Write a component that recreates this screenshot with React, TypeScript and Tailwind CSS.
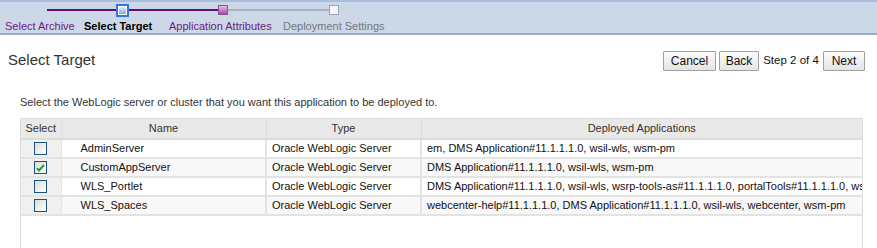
import React from 'react';

const font = { fontFamily: '"Liberation Sans", Arial, sans-serif' };

interface Target {
  name: string;
  type: string;
  apps: string;
  checked: boolean;
}

const targets: Target[] = [
  { name: 'AdminServer', type: 'Oracle WebLogic Server', apps: 'em, DMS Application#11.1.1.1.0, wsil-wls, wsm-pm', checked: false },
  { name: 'CustomAppServer', type: 'Oracle WebLogic Server', apps: 'DMS Application#11.1.1.1.0, wsil-wls, wsm-pm', checked: true },
  { name: 'WLS_Portlet', type: 'Oracle WebLogic Server', apps: 'DMS Application#11.1.1.1.0, wsil-wls, wsrp-tools-as#11.1.1.1.0, portalTools#11.1.1.1.0, wsm-pm', checked: false },
  { name: 'WLS_Spaces', type: 'Oracle WebLogic Server', apps: 'webcenter-help#11.1.1.1.0, DMS Application#11.1.1.1.0, wsil-wls, webcenter, wsm-pm', checked: false },
];

const Checkbox = ({ checked }: { checked: boolean }) => (
  <div className="w-[13px] h-[13px] border border-[#1c5180] bg-gradient-to-br from-[#dcdcd6] to-[#ffffff] flex items-center justify-center mx-auto">
    {checked && (
      <svg width="9" height="8" viewBox="0 0 9 8">
        <path d="M1 4 L3 6.5 L8 1" fill="none" stroke="#21a121" strokeWidth="2" />
      </svg>
    )}
  </div>
);

const Button = ({ label, w }: { label: string; w: string }) => (
  <button className={`${w} h-[20px] border border-[#a0a0a0] rounded-[1px] bg-gradient-to-b from-[#fbfbfb] to-[#e4e4e4] text-[12px] text-[#111] flex items-center justify-center`}>
    {label}
  </button>
);

export default function App() {
  return (
    <div className="w-[877px] h-[248px] bg-white overflow-hidden text-[11px]" style={font}>
      {/* train */}
      <div className="h-[35px] bg-[#ccd8e8] border-t-2 border-[#a8bedb] border-b-2 border-b-[#9daac3]">
        <div className="flex items-center h-[14px] pl-[47px] mt-[1px]">
          <div className="w-[69px] h-[2px] bg-[#650c6f]" />
          <div className="w-[13px] h-[13px] border-2 border-[#3a74df] bg-white p-[1px]">
            <div className="w-full h-full bg-gradient-to-b from-[#d9e8f9] to-[#7eaee4]" />
          </div>
          <div className="w-[89px] h-[2px] bg-[#650c6f]" />
          <div className="w-[10px] h-[10px] border border-[#8f4f9d] bg-gradient-to-b from-[#e6bde8] to-[#9b4fa4]" />
          <div className="w-[101px] h-[2px] bg-[#a6b1c2]" />
          <div className="w-[10px] h-[10px] border border-[#9aa4b3] bg-[#f4f6f8]" />
        </div>
        <div className="flex text-[11px] mt-[2px] leading-[14px] whitespace-nowrap">
          <span className="w-[84px] pl-[5px] shrink-0 text-[#6e1a80]">Select Archive</span>
          <span className="w-[85px] shrink-0 font-bold text-black">Select Target</span>
          <span className="w-[114px] shrink-0 text-[#6e1a80]">Application Attributes</span>
          <span className="text-[#777]">Deployment Settings</span>
        </div>
      </div>

      {/* header row */}
      <div className="flex items-start justify-between pl-[8px] pr-[12px] pt-[16px]">
        <h1 className="text-[15px] text-[#333] leading-[18px]">Select Target</h1>
        <div className="flex items-center">
          <Button label="Cancel" w="w-[53px]" />
          <div className="w-[3px]" />
          <Button label="Back" w="w-[40px]" />
          <span className="w-[64px] text-center text-[11.5px] text-[#111]">Step 2 of 4</span>
          <Button label="Next" w="w-[42px]" />
        </div>
      </div>

      <p className="pl-[20px] mt-[25px] text-[11px] text-[#333] leading-[13px]">
        Select the WebLogic server or cluster that you want this application to be deployed to.
      </p>

      {/* table */}
      <div className="ml-[20px] w-[843px] mt-[9px] border border-[#dcdcdc] h-[140px] overflow-hidden">
        <table className="table-fixed border-collapse w-full text-[11px] text-[#111]">
          <colgroup>
            <col className="w-[40px]" />
            <col className="w-[205px]" />
            <col className="w-[155px]" />
            <col />
          </colgroup>
          <thead>
            <tr className="bg-[#e9e9e9] h-[20px] text-[#333]">
              <th className="font-normal border-r border-b-2 border-[#dcdcdc] text-center">Select</th>
              <th className="font-normal border-r border-b-2 border-[#dcdcdc] text-center">Name</th>
              <th className="font-normal border-r border-b-2 border-[#dcdcdc] text-center">Type</th>
              <th className="font-normal border-b-2 border-[#dcdcdc] text-center">Deployed Applications</th>
            </tr>
          </thead>
          <tbody>
            {targets.map((t, i) => (
              <tr key={t.name} className={`h-[19px] ${i % 2 === 1 ? 'bg-[#f8f8f8]' : 'bg-white'}`}>
                <td className="bg-[#f0f0f0] border-r border-b-2 border-[#e3e3e3]">
                  <Checkbox checked={t.checked} />
                </td>
                <td className="pl-[19px] border-r-2 border-b-2 border-[#e3e3e3] whitespace-nowrap overflow-hidden">{t.name}</td>
                <td className="pl-[5px] border-r-2 border-b-2 border-[#e3e3e3] whitespace-nowrap overflow-hidden">{t.type}</td>
                <td className="pl-[5px] border-b-2 border-[#e3e3e3] whitespace-nowrap overflow-hidden">{t.apps}</td>
              </tr>
            ))}
          </tbody>
        </table>
      </div>
    </div>
  );
}
